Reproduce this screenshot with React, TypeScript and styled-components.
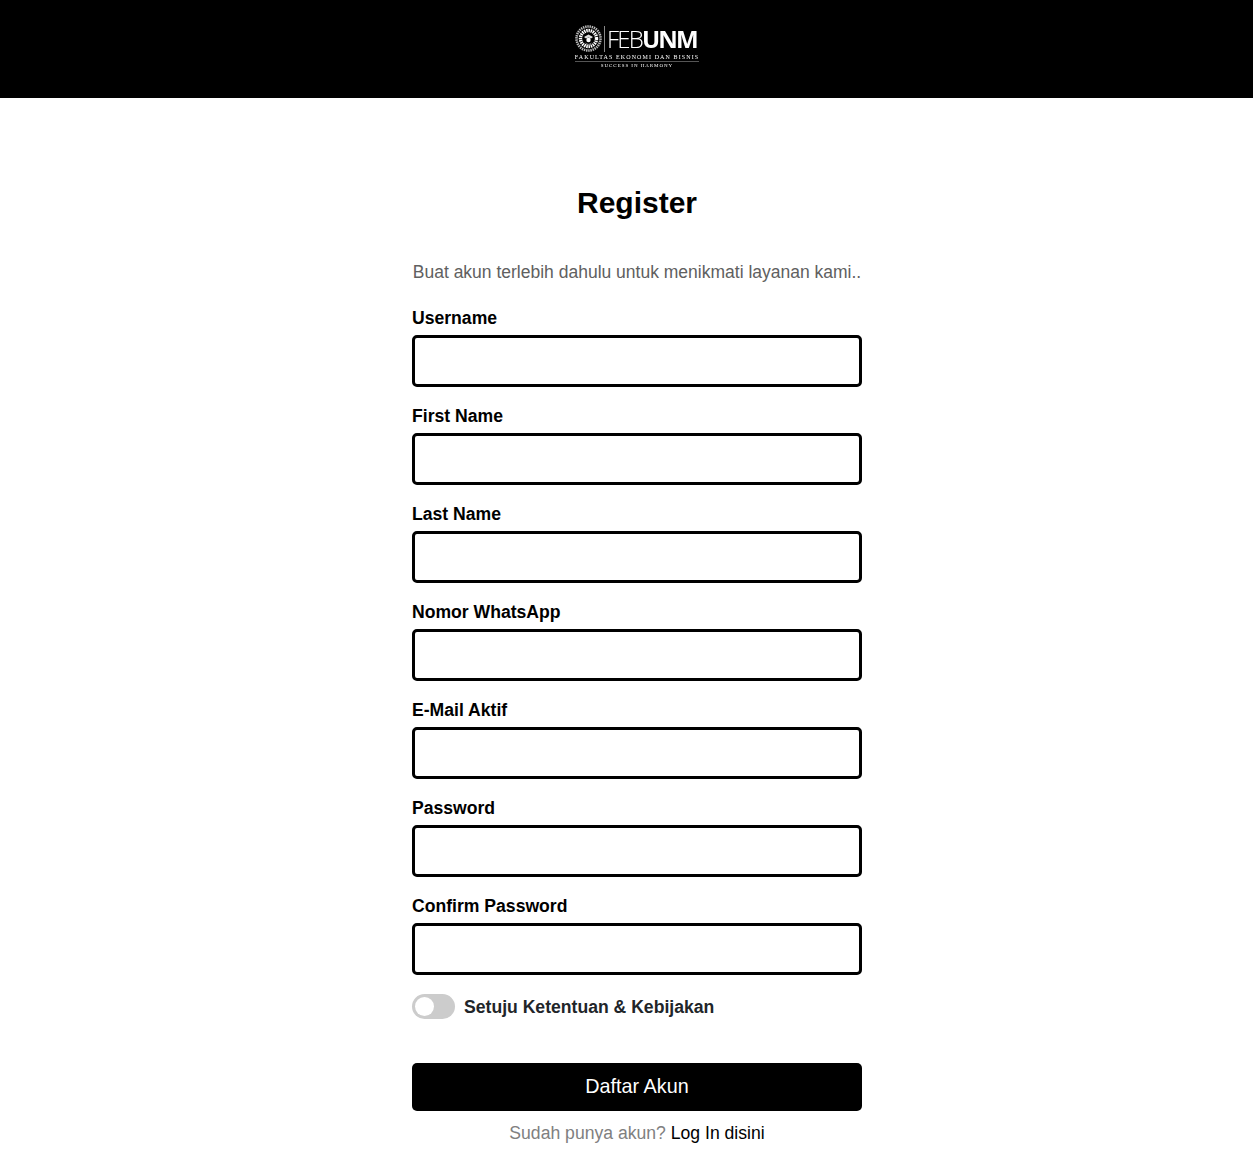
import React from "react";
import styled, { createGlobalStyle } from "styled-components";

const GlobalStyle = createGlobalStyle`
  * {
    box-sizing: border-box;
  }
  body {
    margin: 0;
    background: #fff;
    font-family: "Liberation Sans", Arial, sans-serif;
  }
`;

const fields = [
  { label: "Username", type: "text" },
  { label: "First Name", type: "text" },
  { label: "Last Name", type: "text" },
  { label: "Nomor WhatsApp", type: "text" },
  { label: "E-Mail Aktif", type: "email" },
  { label: "Password", type: "password" },
  { label: "Confirm Password", type: "password" },
];

const Seal = () => (
  <svg width="27" height="27" viewBox="0 0 27 27">
    <circle cx="13.5" cy="13.5" r="12" fill="none" stroke="#bbb" strokeWidth="2.6" strokeDasharray="1.4 0.8" />
    <circle cx="13.5" cy="13.5" r="8" fill="none" stroke="#fff" strokeWidth="3.4" strokeDasharray="1.5 0.7" />
    <circle cx="13.5" cy="13.5" r="5.6" fill="#000" />
    <path d="M9 12 L13.5 9.5 L18 12 L16 13.5 L13.5 12.5 L11 13.5 Z" fill="#ddd" />
    <circle cx="13.5" cy="15" r="2.2" fill="#fff" />
    <path d="M10 17 C11.5 19.5 15.5 19.5 17 17 L15.5 19.5 L11.5 19.5 Z" fill="#bbb" />
  </svg>
);

export default function App() {
  return (
    <>
      <GlobalStyle />
      <Header>
        <Logo>
          <LogoTop>
            <Seal />
            <LogoDivider />
            <LogoName>
              FEB<strong>UNM</strong>
            </LogoName>
          </LogoTop>
          <LogoFaculty>FAKULTAS EKONOMI DAN BISNIS</LogoFaculty>
          <LogoTagline>SUCCESS IN HARMONY</LogoTagline>
        </Logo>
      </Header>
      <Page>
        <Main>
          <Title>Register</Title>
          <Intro>Buat akun terlebih dahulu untuk menikmati layanan kami..</Intro>
          {fields.map((field) => (
            <Field key={field.label}>
              <Label>{field.label}</Label>
              <Input type={field.type} />
            </Field>
          ))}
          <AgreeRow>
            <Toggle />
            <AgreeText>Setuju Ketentuan &amp; Kebijakan</AgreeText>
          </AgreeRow>
          <SubmitButton type="button">Daftar Akun</SubmitButton>
          <LoginHint>
            Sudah punya akun? <LoginLink href="#">Log In disini</LoginLink>
          </LoginHint>
        </Main>
      </Page>
    </>
  );
}

const Header = styled.header`
  height: 98px;
  background: #000;
  display: flex;
  justify-content: center;
  padding: 24px 0 0 21px;
`;

const Logo = styled.div`
  width: 126px;
  height: 46px;
  color: #fff;
  display: flex;
  flex-direction: column;
  align-items: center;
  filter: blur(0.3px);
`;

const LogoTop = styled.div`
  display: flex;
  align-items: center;
  height: 29px;
  width: 124px;
`;

const LogoDivider = styled.span`
  width: 1px;
  height: 26px;
  background: #888;
  margin: 0 2px;
`;

const LogoName = styled.span`
  font-family: "Open Sans", "Liberation Sans", sans-serif;
  font-size: 24px;
  font-weight: 300;
  letter-spacing: -1.8px;
  line-height: 29px;

  strong {
    font-weight: 700;
  }
`;

const LogoFaculty = styled.div`
  font-family: "Liberation Serif", serif;
  font-size: 6px;
  line-height: 8px;
  letter-spacing: 1.1px;
  white-space: nowrap;
  border-bottom: 1px solid #555;
`;

const LogoTagline = styled.div`
  font-family: "Liberation Serif", serif;
  font-size: 5px;
  line-height: 6px;
  letter-spacing: 0.95px;
  white-space: nowrap;
  margin-top: 1px;
`;

const Page = styled.div`
  padding-left: 21px;
  display: flex;
  justify-content: center;
`;

const Main = styled.main`
  width: 450px;
  padding: 87px 0 24px;
  display: flex;
  flex-direction: column;
`;

const Title = styled.h1`
  margin: 0;
  font-size: 30px;
  line-height: 36px;
  font-weight: 700;
  color: #000;
  text-align: center;
`;

const Intro = styled.p`
  margin: 39px 0 0;
  font-size: 17.5px;
  line-height: 24px;
  color: #606060;
  text-align: center;
  white-space: nowrap;
`;

const Field = styled.div`
  margin-top: 22px;
  display: flex;
  flex-direction: column;

  & + & {
    margin-top: 17px;
  }
`;

const Label = styled.label`
  font-size: 17.6px;
  line-height: 24px;
  font-weight: 700;
  color: #000;
  margin-bottom: 5px;
`;

const Input = styled.input`
  display: block;
  width: 100%;
  height: 52px;
  border: 3px solid #000;
  border-radius: 5px;
  background: #fff;
  outline: none;
`;

const AgreeRow = styled.div`
  margin-top: 18px;
  height: 27px;
  display: flex;
  align-items: center;
  gap: 9px;
`;

const Toggle = styled.span`
  position: relative;
  width: 43px;
  height: 25px;
  border-radius: 13px;
  background: #ccc;

  &::before {
    content: "";
    position: absolute;
    left: 3px;
    top: 3px;
    width: 19px;
    height: 19px;
    border-radius: 50%;
    background: #fff;
  }
`;

const AgreeText = styled.span`
  margin-top: 1px;
  font-size: 17.6px;
  line-height: 20px;
  font-weight: 700;
  color: #212529;
`;

const SubmitButton = styled.button`
  margin-top: 43px;
  height: 48px;
  padding: 0 0 2px;
  border: none;
  border-radius: 5px;
  background: #000;
  color: #fff;
  font-family: inherit;
  font-size: 19.8px;
`;

const LoginHint = styled.p`
  margin: 10px 0 0;
  font-size: 17.6px;
  line-height: 24px;
  color: #808080;
  text-align: center;
`;

const LoginLink = styled.a`
  color: #000;
  text-decoration: none;
`;
